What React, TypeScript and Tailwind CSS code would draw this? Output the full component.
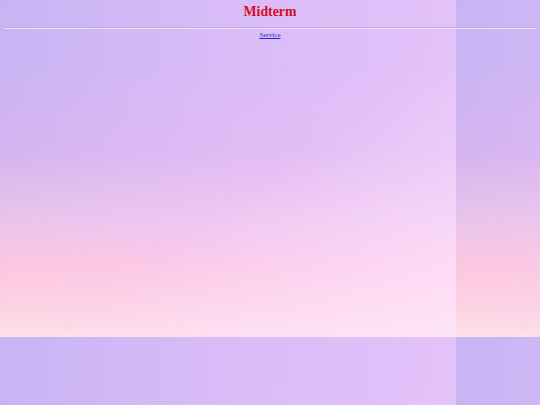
const SKY =
  "bg-[image:linear-gradient(to_bottom_right,rgba(255,255,255,0)_55%,rgba(255,245,255,0.45)_100%),linear-gradient(to_right,rgba(255,208,255,0)_0%,rgba(255,206,255,0.3)_50%,rgba(255,208,255,0.5)_100%),linear-gradient(to_bottom,#c8b4f4_0%,#c9b4f4_18%,#d4b4f0_45%,#e8c4ec_65%,#fcc8e0_80%,#fcd8e4_95%,#fde0e8_100%)]";

export default function App() {
  return (
    <div
      className={`min-h-[405px] w-full ${SKY} bg-[length:456px_337px] bg-repeat px-[4px] pt-[4px] font-['Liberation_Serif',serif]`}
    >
      <h1 className="text-center text-[13.8px] leading-[16px] font-bold text-[#d60c24]">
        Midterm
      </h1>
      <hr className="mt-[7px] border-t border-b border-t-[#bcaadc] border-b-[#eee4fa]" />
      <p className="mt-[2px] text-center text-[7px] leading-[8px]">
        <a href="#" className="text-[#2626c8] underline">
          Service
        </a>
      </p>
    </div>
  );
}
